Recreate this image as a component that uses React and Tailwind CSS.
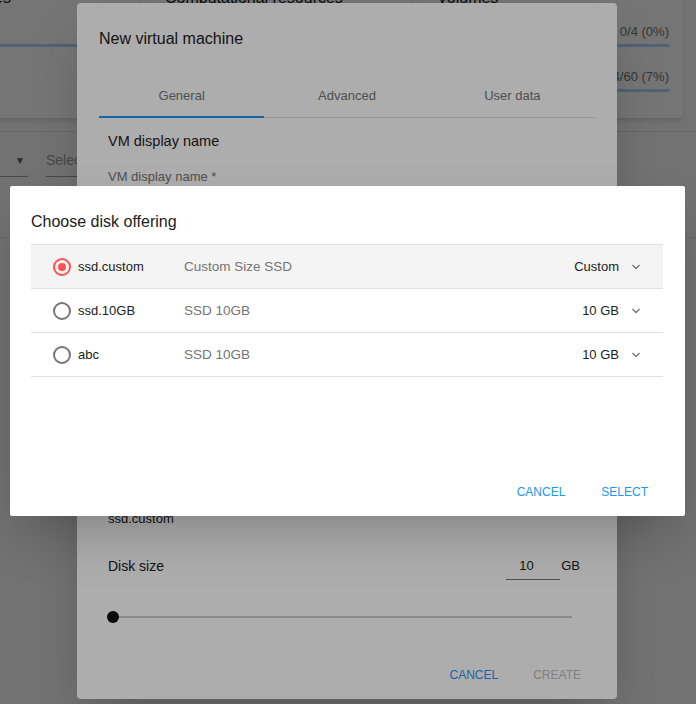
import React from "react";

const offerings = [
  { name: "ssd.custom", desc: "Custom Size SSD", size: "Custom", selected: true },
  { name: "ssd.10GB", desc: "SSD 10GB", size: "10 GB" },
  { name: "abc", desc: "SSD 10GB", size: "10 GB" },
];

const cards = [
  { title: "Virtual machines", rows: [{ label: "Running", value: "2/20" }] },
  {
    title: "Computational resources",
    rows: [
      { label: "CPU", value: "2/40 (5%)" },
      { label: "Memory", value: "2/80 (3%)" },
    ],
  },
  {
    title: "Volumes",
    rows: [
      { label: "Volumes", value: "0/4 (0%)" },
      { label: "Storage", value: "4/60 (7%)" },
    ],
  },
];

function Radio({ checked }) {
  return (
    <span
      className={
        checked
          ? "flex h-[18px] w-[18px] shrink-0 items-center justify-center rounded-full border-2 border-[#ff5252]"
          : "flex h-[18px] w-[18px] shrink-0 items-center justify-center rounded-full border-2 border-[#757575]"
      }
    >
      {checked && <span className="h-[8px] w-[8px] rounded-full bg-[#ff5252]" />}
    </span>
  );
}

function Chevron() {
  return (
    <svg width="10" height="6" viewBox="0 0 10 6" className="shrink-0">
      <polyline points="1.5,1 5,4.5 8.5,1" fill="none" stroke="#757575" strokeWidth="1.4" />
    </svg>
  );
}

function StatCard({ title, rows }) {
  return (
    <div className="h-[142px] w-[259px] shrink-0 rounded-[4px] bg-white pl-[13px] pr-[14px] pt-[12px] shadow-md">
      <div className="text-[16px] leading-[20px] text-[#212121]">{title}</div>
      <div className="mt-[16px] flex flex-col gap-[22px]">
        {rows.map((r) => (
          <div key={r.label}>
            <div className="flex justify-between text-[13px] leading-[16px] text-[#757575]">
              <span>{r.label}</span>
              <span>{r.value}</span>
            </div>
            <div className="mt-[4px] h-[3px] bg-[#b3d4fc]" />
          </div>
        ))}
      </div>
    </div>
  );
}

export default function App() {
  return (
    <div
      className="relative h-[704px] w-[696px] overflow-hidden bg-[#fafafa]"
      style={{ fontFamily: "'Liberation Sans', Arial, sans-serif" }}
    >
      {/* page behind the dialogs */}
      <div className="-ml-[120px] -mt-[24px] flex gap-[13px]">
        {cards.map((c) => (
          <StatCard key={c.title} {...c} />
        ))}
      </div>
      <div className="mt-[13px] border-t border-[#e0e0e0]" />
      <div className="-ml-[100px] mt-[13px] flex gap-[18px]">
        <div className="flex h-[32px] w-[128px] items-center justify-between border-b border-[#9e9e9e] text-[14px] text-[#212121]">
          <span>All zones</span>
          <span className="mr-[3px] text-[10px] text-[#616161]">▼</span>
        </div>
        <div className="flex h-[32px] w-[200px] items-center border-b border-[#9e9e9e] text-[14px] text-[#9e9e9e]">
          Select group
        </div>
      </div>
      <div className="mt-[60px] border-t border-[#e0e0e0]" />

      {/* new virtual machine dialog */}
      <div className="absolute inset-0 flex items-center justify-center bg-[rgba(0,0,0,0.32)]">
        <div className="mb-[2px] mr-[2px] flex h-[696px] w-[540px] flex-col rounded-[4px] bg-white px-[22px] shadow-2xl">
          <h2 className="pt-[26px] text-[16px] leading-[20px] text-[#212121]">New virtual machine</h2>
          <div className="mt-[25px] flex border-b border-[#e0e0e0]">
            <div className="-mb-px flex h-[44px] flex-1 items-center justify-center border-b-2 border-[#2196f3] pt-px text-[13px] text-[#757575]">
              General
            </div>
            <div className="flex h-[43px] flex-1 items-center justify-center pt-px text-[13px] text-[#757575]">
              Advanced
            </div>
            <div className="flex h-[43px] flex-1 items-center justify-center pt-px text-[13px] text-[#757575]">
              User data
            </div>
          </div>
          <div className="flex flex-1 flex-col pl-[9px] pr-[15px]">
            <div className="mt-[13px] text-[14.5px] leading-[20px] text-[#212121]">VM display name</div>
            <div className="mt-[18px] text-[13px] leading-[16px] text-[#757575]">VM display name *</div>
            <div className="flex-1" />
            <div className="text-[13px] leading-[16px] text-[#212121]">ssd.custom</div>
            <div className="mt-[25px] flex h-[28px] items-center justify-between">
              <span className="text-[14px] text-[#212121]">Disk size</span>
              <div className="flex items-center">
                <div className="flex h-[28px] w-[54px] items-center border-b border-[#757575] pl-[13px] text-[13px] text-[#212121]">
                  10
                </div>
                <span className="ml-[1px] text-[13px] text-[#212121]">GB</span>
              </div>
            </div>
            <div className="relative mt-[31px] flex h-[12px] w-[464px] items-center">
              <div className="h-[2px] w-full bg-[#cbcbcb]" />
              <div className="absolute -left-px top-0 h-[12px] w-[12px] rounded-full bg-[#111111]" />
            </div>
            <div className="mb-[6px] mt-[34px] flex h-[36px] items-center justify-end gap-[36px] pr-0 text-[12px]">
              <span className="translate-x-[2px] text-[#2196f3]">CANCEL</span>
              <span className="translate-x-[1px] text-[#bdbdbd]">CREATE</span>
            </div>
          </div>
        </div>
      </div>

      {/* choose disk offering dialog */}
      <div className="absolute inset-0 flex items-center justify-center bg-[rgba(0,0,0,0.32)]">
        <div className="mb-[2px] mr-[1px] flex h-[330px] w-[675px] flex-col rounded-[2px] bg-white pl-[21px] pr-[22px] shadow-2xl">
          <h2 className="pt-[24px] text-[16px] leading-[24px] text-[#212121]">Choose disk offering</h2>
          <div className="mt-[10px] border-t border-[#e0e0e0]">
            {offerings.map((o) => (
              <div
                key={o.name}
                className={
                  o.selected
                    ? "flex h-[44px] items-center border-b border-[#e0e0e0] bg-[#f4f4f4] pl-[22px] pr-[22px] pt-px text-[13px]"
                    : "flex h-[44px] items-center border-b border-[#e0e0e0] pl-[22px] pr-[22px] pt-px text-[13px]"
                }
              >
                <Radio checked={o.selected} />
                <span className="ml-[7px] w-[106px] text-[#212121]">{o.name}</span>
                <span className="flex-1 text-[13.5px] text-[#757575]">{o.desc}</span>
                <span className="text-[#212121]">{o.size}</span>
                <span className="ml-[12px]">
                  <Chevron />
                </span>
              </div>
            ))}
          </div>
          <div className="flex-1" />
          <div className="mb-[6px] flex h-[36px] items-center justify-end gap-[36px] pr-[15px] text-[12px]">
            <span className="text-[#2196f3]">CANCEL</span>
            <span className="text-[#2196f3]">SELECT</span>
          </div>
        </div>
      </div>
    </div>
  );
}
